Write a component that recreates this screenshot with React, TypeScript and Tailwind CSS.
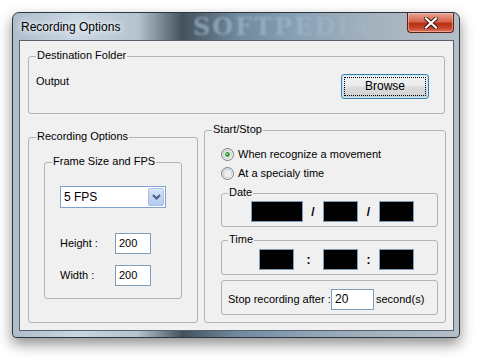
import type { ReactNode } from 'react';

/* ------------------------------------------------------------------ */
/*  Small Win7-style controls                                          */
/* ------------------------------------------------------------------ */

function Group({ label, labelLeft = 'left-[7px]', className, children }: {
  label?: string;
  labelLeft?: string;
  className: string;
  children?: ReactNode;
}) {
  return (
    <div className={`relative shrink-0 rounded-[3px] border border-[#b4b4b4] ${className}`}>
      {label && (
        <span className={`absolute -top-[8px] ${labelLeft} bg-[#f0f0f0] px-[1px] leading-[13px]`}>{label}</span>
      )}
      {children}
    </div>
  );
}

function TextBox({ value, className }: { value: string; className: string }) {
  return (
    <div className={`h-[21px] border border-[#7f9db9] bg-white pl-[3px] leading-[19px] ${className}`}>{value}</div>
  );
}

function BlackBox({ className }: { className: string }) {
  return <div className={`h-[21px] border border-[#7f9db9] bg-black ${className}`} />;
}

function Radio({ checked, label }: { checked?: boolean; label: string }) {
  return (
    <div className="flex h-[13px] items-center gap-[4px]">
      <svg width="13" height="13" viewBox="0 0 13 13">
        <defs>
          <linearGradient id={`rg-${label.length}`} x1="0" y1="0" x2="1" y2="1">
            <stop offset="0" stopColor="#dcdcdc" />
            <stop offset="1" stopColor="#ffffff" />
          </linearGradient>
        </defs>
        <circle cx="6.5" cy="6.5" r="6" fill={`url(#rg-${label.length})`} stroke="#7a7f86" />
        <circle cx="6.5" cy="6.5" r="4.2" fill="none" stroke="#c9ced4" />
        {checked && <circle cx="6.5" cy="6.5" r="2.4" fill="#2f9a36" />}
        {checked && <circle cx="6" cy="6" r="0.9" fill="#8fe08e" />}
      </svg>
      <span className="whitespace-nowrap leading-[13px]">{label}</span>
    </div>
  );
}

/* ------------------------------------------------------------------ */
/*  Window                                                             */
/* ------------------------------------------------------------------ */

export default function App() {
  return (
    <div className="h-[358px] w-[480px] bg-white pl-[12px] pt-[12px] font-['Liberation_Sans',Arial,sans-serif] text-[11px] text-black">
      <div className="relative flex h-[326px] w-[448px] flex-col overflow-hidden rounded-t-[7px] rounded-b-[4px] border border-[#2e353c] bg-[linear-gradient(90deg,#aebccb_0%,#c8d6e3_14%,#b5c3cf_28%,#44525d_38%,#6f889d_50%,#8aa1b5_64%,#a4b1bc_80%,#b3bec8_100%)] pb-[6px] pl-[6px] pr-[5px] shadow-[0_6px_14px_rgba(0,0,0,0.45)]">
        {/* title bar */}
        <div className="relative flex h-[27px] items-start">
          <span className="pointer-events-none absolute left-[174px] top-[1px] whitespace-nowrap font-['DejaVu_Serif',serif] text-[24px] font-bold leading-[26px] tracking-[2px] text-[#9fb6cb] opacity-70 blur-[1.2px]">
            SOFTPEDIA
          </span>
          <span className="relative ml-[2px] mt-[7px] text-[12px] leading-[15px] text-black [text-shadow:0_0_6px_#ffffff,0_0_10px_#ffffff]">
            Recording Options
          </span>
          <div className="relative ml-auto flex h-[20px] w-[47px] items-center justify-center rounded-b-[4px] border border-t-0 border-[#5d2118] bg-[linear-gradient(180deg,#e7a596_0%,#d7644c_45%,#b62f17_55%,#c4472c_80%,#e07a5e_100%)] shadow-[inset_0_0_0_1px_rgba(255,210,200,0.5)]">
            <svg width="14" height="12" viewBox="0 0 14 12">
              <path d="M2 1.5 L12 10.5 M12 1.5 L2 10.5" stroke="#3b1510" strokeWidth="4" strokeLinecap="square" />
              <path d="M2 1.5 L12 10.5 M12 1.5 L2 10.5" stroke="#ffffff" strokeWidth="2.2" strokeLinecap="square" />
            </svg>
          </div>
        </div>

        {/* client area */}
        <div className="relative flex-1 border border-[#56616b] bg-[#f0f0f0]">
          {/* destination folder */}
          <Group label="Destination Folder" className="ml-[8px] mt-[15px] h-[58px] w-[417px]">
            <div className="flex pl-[7px] pt-[17px]">
              <span className="mt-[1px] leading-[13px]">Output</span>
              <button className="ml-auto mr-[15px] h-[25px] w-[88px] rounded-[3px] border border-[#3c7fb1] bg-[linear-gradient(180deg,#f2f2f2_0%,#ebebeb_48%,#dddddd_52%,#cfcfcf_100%)] p-[2px] shadow-[inset_0_0_0_1px_#bfe9fb]">
                <div className="flex h-full w-full items-center justify-center border border-dotted border-black text-[12px] leading-[13px]">
                  Browse
                </div>
              </button>
            </div>
          </Group>

          <div className="ml-[8px] mt-[16px] flex items-end gap-[6px]">
            {/* recording options */}
            <Group label="Recording Options" className="h-[186px] w-[170px]">
              <Group label="Frame Size and FPS" className="ml-[15px] mt-[24px] h-[137px] w-[138px]">
                <div className="ml-[15px] mt-[23px] flex h-[22px] w-[106px] border border-[#7da2ce] bg-white">
                  <span className="flex-1 pl-[3px] text-[12px] leading-[20px]">5 FPS</span>
                  <div className="m-[1px] flex w-[16px] items-center justify-center rounded-[2px] border border-[#a9c0e4] bg-[linear-gradient(180deg,#d9e6f9_0%,#c3d5f2_50%,#b4caee_100%)]">
                    <svg width="9" height="6" viewBox="0 0 9 6">
                      <path d="M1 1 L4.5 4.5 L8 1" fill="none" stroke="#4d6185" strokeWidth="2" />
                    </svg>
                  </div>
                </div>
                <div className="ml-[15px] mt-[25px] flex items-center">
                  <span className="w-[55px]">Height :</span>
                  <TextBox value="200" className="w-[36px]" />
                </div>
                <div className="ml-[15px] mt-[11px] flex items-center">
                  <span className="w-[55px]">Width :</span>
                  <TextBox value="200" className="w-[36px]" />
                </div>
              </Group>
            </Group>

            {/* start / stop */}
            <Group label="Start/Stop" className="flex h-[193px] w-[242px] flex-col">
              <div className="ml-[16px] mt-[17px]">
                <Radio checked label="When recognize a movement" />
              </div>
              <div className="ml-[16px] mt-[6px]">
                <Radio label="At a specialy time" />
              </div>
              <Group label="Date" labelLeft="left-[6px]" className="ml-[16px] mt-[13px] h-[34px] w-[217px]">
                <div className="flex items-center pl-[29px] pt-[7px]">
                  <BlackBox className="w-[52px]" />
                  <span className="w-[20px] text-center text-[12px] font-bold">/</span>
                  <BlackBox className="w-[35px]" />
                  <span className="w-[21px] text-center text-[12px] font-bold">/</span>
                  <BlackBox className="w-[35px]" />
                </div>
              </Group>
              <Group label="Time" labelLeft="left-[6px]" className="ml-[16px] mt-[13px] h-[35px] w-[217px]">
                <div className="flex items-center pl-[37px] pt-[8px]">
                  <BlackBox className="w-[35px]" />
                  <span className="w-[29px] text-center text-[12px] font-bold">:</span>
                  <BlackBox className="w-[35px]" />
                  <span className="w-[21px] text-center text-[12px] font-bold">:</span>
                  <BlackBox className="w-[35px]" />
                </div>
              </Group>
              <Group className="ml-[16px] mt-[5px] h-[35px] w-[217px]">
                <div className="flex items-center pl-[6px] pt-[8px]">
                  <span className="w-[103px] whitespace-nowrap">Stop recording after :</span>
                  <TextBox value="20" className="w-[43px] text-[12px]" />
                  <span className="ml-[2px] whitespace-nowrap">second(s)</span>
                </div>
              </Group>
            </Group>
          </div>
        </div>
      </div>
    </div>
  );
}
